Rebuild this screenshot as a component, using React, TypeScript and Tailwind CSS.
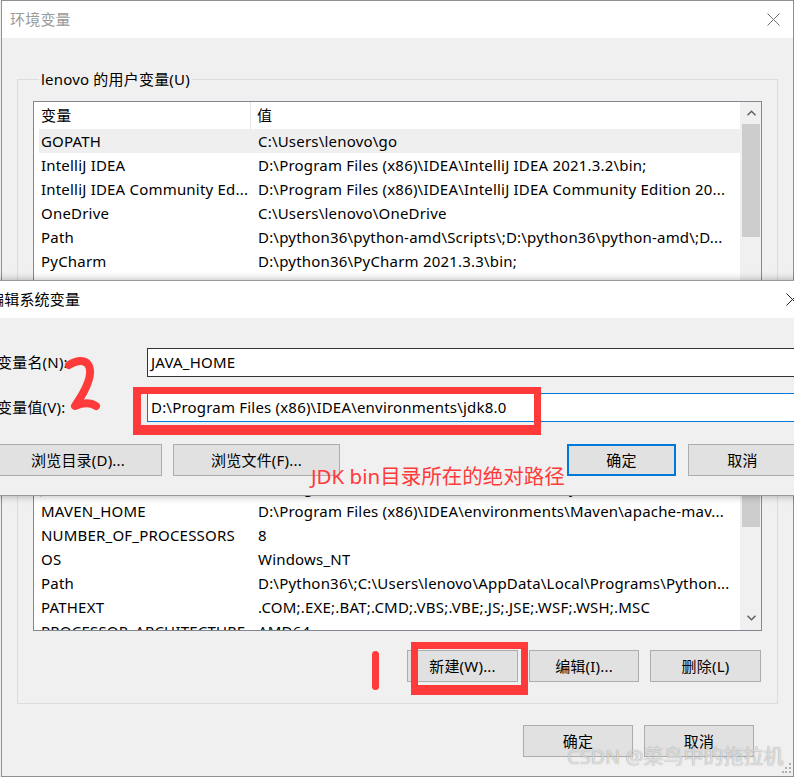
const topRows = [
  { name: 'GOPATH', value: 'C:\\Users\\lenovo\\go', selected: true },
  { name: 'IntelliJ IDEA', value: 'D:\\Program Files (x86)\\IDEA\\IntelliJ IDEA 2021.3.2\\bin;' },
  { name: 'IntelliJ IDEA Community Ed...', value: 'D:\\Program Files (x86)\\IDEA\\IntelliJ IDEA Community Edition 20...' },
  { name: 'OneDrive', value: 'C:\\Users\\lenovo\\OneDrive' },
  { name: 'Path', value: 'D:\\python36\\python-amd\\Scripts\\;D:\\python36\\python-amd\\;D...' },
  { name: 'PyCharm', value: 'D:\\python36\\PyCharm 2021.3.3\\bin;' },
  { name: 'PyCharm Community Edition', value: 'D:\\python36\\PyCharm Community Edition 2019.3\\bin;' },
];

const bottomRows = [
  { name: 'JAVA_HOME', value: 'D:\\Program Files (x86)\\IDEA\\environments\\jdk8.0' },
  { name: 'MAVEN_HOME', value: 'D:\\Program Files (x86)\\IDEA\\environments\\Maven\\apache-mav...' },
  { name: 'NUMBER_OF_PROCESSORS', value: '8' },
  { name: 'OS', value: 'Windows_NT' },
  { name: 'Path', value: 'D:\\Python36\\;C:\\Users\\lenovo\\AppData\\Local\\Programs\\Python...' },
  { name: 'PATHEXT', value: '.COM;.EXE;.BAT;.CMD;.VBS;.VBE;.JS;.JSE;.WSF;.WSH;.MSC' },
  { name: 'PROCESSOR_ARCHITECTURE', value: 'AMD64' },
];

function Row({ name, value, selected }: { name: string; value: string; selected?: boolean }) {
  return (
    <div
      className={`ml-[5px] flex h-[24px] shrink-0 items-center whitespace-nowrap text-[15px] text-black ${
        selected ? 'bg-[#efefef]' : ''
      }`}
    >
      <div className="w-[212px] shrink-0 overflow-hidden pl-[2px]">{name}</div>
      <div className="overflow-hidden pl-[7px]">{value}</div>
    </div>
  );
}

function WinButton({ label, width, primary }: { label: string; width: string; primary?: boolean }) {
  return (
    <div
      className={`flex h-[32px] shrink-0 items-center justify-center bg-[#e1e1e1] text-[15px] text-black ${width} ${
        primary ? 'border-2 border-[#0078d7]' : 'border border-[#adadad]'
      }`}
    >
      {label}
    </div>
  );
}

function CloseX({ color }: { color: string }) {
  return (
    <svg width="13" height="13" viewBox="0 0 13 13" fill="none" stroke={color} strokeWidth="1">
      <line x1="0.5" y1="0.5" x2="12.5" y2="12.5" />
      <line x1="12.5" y1="0.5" x2="0.5" y2="12.5" />
    </svg>
  );
}

function Chevron({ down }: { down?: boolean }) {
  return (
    <svg width="9" height="6" viewBox="0 0 9 6" fill="none" stroke="#606060" strokeWidth="1.5">
      {down ? <polyline points="0.5 0.8 4.5 4.8 8.5 0.8" /> : <polyline points="0.5 5.2 4.5 1.2 8.5 5.2" />}
    </svg>
  );
}

export default function App() {
  return (
    <div className="relative h-[777px] w-[794px] overflow-hidden bg-[#f0f0f0] pl-[1px] font-['Noto_Sans','Noto_Sans_CJK_SC',sans-serif] tracking-[0.2px]">
      {/* 环境变量 window */}
      <div className="flex h-[777px] w-[793px] flex-col border border-[#8f8f8f]">
        <div className="flex h-[37px] shrink-0 items-center justify-between bg-white pl-[8px] pr-[13px]">
          <span className="text-[15px] text-[#9a9a9a]">环境变量</span>
          <CloseX color="#707070" />
        </div>

        <div className="flex flex-1 flex-col bg-[#f0f0f0]">
          <fieldset className="mx-[15px] mt-[31px] border border-[#dcdcdc] px-[15px] pb-[21px] pt-[12px]">
            <legend className="ml-[6px] px-[2px] text-[15px] leading-[20px] text-black">lenovo 的用户变量(U)</legend>

            <div className="flex h-[530px] border border-[#828790] bg-white">
              <div className="flex flex-1 flex-col overflow-hidden">
                <div className="flex h-[27px] shrink-0 items-center text-[15px] text-black">
                  <div className="h-full w-[217px] border-r border-[#e5e5e5] pl-[7px] leading-[27px]">变量</div>
                  <div className="pl-[6px]">值</div>
                </div>
                {topRows.map((r) => (
                  <Row key={r.name} {...r} />
                ))}
                <div className="h-[178px] shrink-0" />
                {bottomRows.map((r) => (
                  <Row key={r.name + r.value} {...r} />
                ))}
              </div>

              <div className="flex w-[21px] shrink-0 flex-col bg-[#f0f0f0] pb-[1px] pl-[1px]">
                <div className="flex h-[22px] shrink-0 items-center justify-center">
                  <Chevron />
                </div>
                <div className="mx-[1px] h-[113px] shrink-0 bg-[#cdcdcd]" />
                <div className="flex-1" />
                <div className="mx-[1px] h-[58px] shrink-0 bg-[#cdcdcd]" />
                <div className="h-[80px] shrink-0" />
                <div className="flex h-[22px] shrink-0 items-center justify-center">
                  <Chevron down />
                </div>
              </div>
            </div>

            <div className="mt-[19px] flex justify-end gap-[11px] pr-[1px]">
              <WinButton label="新建(W)..." width="w-[111px]" />
              <WinButton label="编辑(I)..." width="w-[110px]" />
              <WinButton label="删除(L)" width="w-[111px]" />
            </div>
          </fieldset>

          <div className="mt-[21px] flex justify-end gap-[11px] pr-[39px]">
            <WinButton label="确定" width="w-[110px]" />
            <WinButton label="取消" width="w-[110px]" />
          </div>
        </div>
      </div>

      {/* 编辑系统变量 dialog */}
      <div className="absolute left-[-14px] top-[280px] flex h-[216px] w-[824px] flex-col border border-[#9a9a9a] bg-[#f0f0f0] shadow-[0_0_8px_rgba(0,0,0,0.3)]">
        <div className="flex h-[37px] shrink-0 items-center justify-between bg-white pl-[2px] pr-[10px]">
          <span className="text-[15px] text-black">编辑系统变量</span>
          <CloseX color="#222" />
        </div>
        <div className="flex flex-1 flex-col pt-[30px]">
          <div className="flex items-center pl-[10px]">
            <div className="w-[150px] shrink-0 text-[15px] text-black">变量名(N):</div>
            <div className="flex h-[29px] flex-1 items-center border border-[#333] bg-white pl-[3px] text-[15px] text-black">
              JAVA_HOME
            </div>
          </div>
          <div className="mt-[16px] flex items-center pl-[10px]">
            <div className="w-[150px] shrink-0 text-[15px] text-black">变量值(V):</div>
            <div className="flex h-[29px] flex-1 items-center border border-[#0078d7] bg-white pl-[3px] text-[15px] text-black">
              D:\Program Files (x86)\IDEA\environments\jdk8.0
            </div>
          </div>
          <div className="mt-[22px] flex gap-[11px] pl-[7px] pr-[12px]">
            <WinButton label="浏览目录(D)..." width="w-[168px]" />
            <WinButton label="浏览文件(F)..." width="w-[167px]" />
            <div className="ml-auto flex gap-[12px]">
              <WinButton label="确定" width="w-[109px]" primary />
              <WinButton label="取消" width="w-[109px]" />
            </div>
          </div>
        </div>
      </div>

      {/* red annotations */}
      <div className="absolute left-[133px] top-[387px] h-[48px] w-[408px] border-b-[10px] border-l-[8px] border-r-[7px] border-t-[7px] border-[#ff3a3a]" />
      <div className="absolute left-[311px] top-[462px] whitespace-nowrap text-[20.5px] leading-[28px] tracking-normal text-[#ff3a3a]">
        JDK bin目录所在的绝对路径
      </div>
      <svg className="absolute left-0 top-0" width="120" height="430" viewBox="0 0 120 430" fill="none">
        <path
          d="M69 365 C75 361, 85 358, 89 366 C93 375, 86 390, 75 406 C82 403, 90 402, 96 406"
          stroke="#ff3a3a"
          strokeWidth="8"
          strokeLinecap="round"
          strokeLinejoin="round"
        />
      </svg>
      <div className="absolute left-[411px] top-[642px] h-[53px] w-[117px] border-b-[10px] border-l-[7px] border-r-[7px] border-t-[7px] border-[#ff3a3a]" />
      <div className="absolute left-[372px] top-[651px] h-[39px] w-[7px] rounded-full bg-[#ff3a3a]" />

      {/* watermark */}
      <div className="absolute left-[567px] top-[743px] whitespace-nowrap text-[20px] leading-[28px] tracking-normal text-[rgba(255,255,255,0.7)] [text-shadow:0_0_1px_rgba(0,0,0,0.45)]">
        CSDN @菜鸟中的拖拉机
      </div>
      <svg className="absolute left-[782px] top-[762px]" width="10" height="12" viewBox="0 0 10 12" fill="#b0b0b0">
        <rect x="7" y="1" width="2" height="2" />
        <rect x="3" y="5" width="2" height="2" />
        <rect x="7" y="5" width="2" height="2" />
        <rect x="0" y="9" width="2" height="2" />
        <rect x="3" y="9" width="2" height="2" />
        <rect x="7" y="9" width="2" height="2" />
      </svg>
    </div>
  );
}
